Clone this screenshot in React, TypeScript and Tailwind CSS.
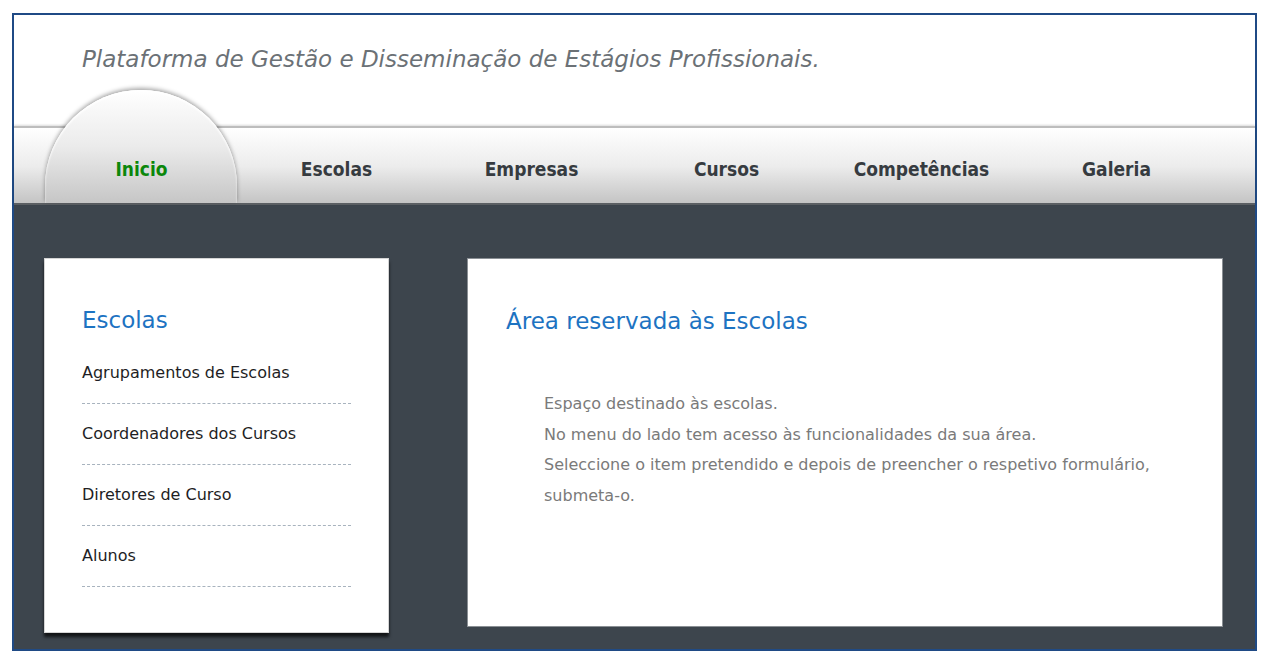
import React from 'react';

const NavBar: React.FC = () => {
  const items = ['Inicio', 'Escolas', 'Empresas', 'Cursos', 'Competências', 'Galeria'];

  return (
    <nav className="relative h-[79px] border-t-2 border-[#bdbdbd] bg-gradient-to-b from-[#ffffff] via-[#ececec] to-[#c2c2c2] shadow-[0_-1px_2px_rgba(0,0,0,0.15)]">
      <div className="absolute inset-x-0 bottom-0 h-[2px] bg-[#5b5f63]" />
      <ul className="flex h-full pl-[30px]">
        {items.map((item, i) => (
          <li key={item} className="relative flex h-full w-[195px] items-center justify-center pt-[6px]">
            {i === 0 && (
              <div className="absolute bottom-[2px] left-[1px] h-[113px] w-[192px] rounded-t-full bg-gradient-to-b from-[#ffffff] via-[#ebebeb] to-[#c6c6c6] shadow-[0_-2px_4px_rgba(0,0,0,0.35),inset_0_2px_2px_rgba(255,255,255,0.9)]" />
            )}
            <span
              className={`relative font-['DejaVu_Sans_Condensed','DejaVu_Sans',sans-serif] text-[19px] font-bold ${
                i === 0 ? 'text-[#0b870b]' : 'text-[#363b40]'
              }`}
            >
              {item}
            </span>
          </li>
        ))}
      </ul>
    </nav>
  );
};

const Sidebar: React.FC = () => {
  const links = ['Agrupamentos de Escolas', 'Coordenadores dos Cursos', 'Diretores de Curso', 'Alunos'];

  return (
    <aside className="h-[375px] w-[345px] shrink-0 border border-[#d5d5d5] bg-white pl-[37px] pr-[37px] pt-[46px] shadow-[0_4px_3px_rgba(0,0,0,0.7)]">
      <h3 className="text-[23px] leading-[30px] text-[#1d73c2] mb-[8px]">Escolas</h3>
      <ul>
        {links.map((link) => (
          <li key={link} className="border-b border-dashed border-[#a8b3be] pb-[20px] pt-[20px] text-[16px] leading-[20px] text-[#1e1e24]">
            {link}
          </li>
        ))}
      </ul>
    </aside>
  );
};

const App: React.FC = () => {
  return (
    <div className="h-[662px] w-[1269px] bg-white pl-[12px] pt-[13px] font-['DejaVu_Sans',sans-serif]">
      <div className="flex h-[638px] w-[1245px] flex-col border-2 border-[#1f4a85] bg-white">
        <header className="h-[111px] pl-[68px] pt-[29px]">
          <h1 className="text-[23px] italic leading-[30px] text-[#6b7176]">
            Plataforma de Gestão e Disseminação de Estágios Profissionais.
          </h1>
        </header>

        <NavBar />

        <main className="flex flex-1 gap-[78px] bg-[#3d454d] pl-[30px] pt-[53px]">
          <Sidebar />

          <section className="h-[369px] w-[756px] border border-[#8a8f94] bg-white pl-[38px] pt-[47px]">
            <h2 className="text-[23px] leading-[30px] text-[#1d73c2]">Área reservada às Escolas</h2>
            <div className="mt-[53px] pl-[38px] text-[16px] leading-[30.5px] text-[#7a7a7a]">
              <p>Espaço destinado às escolas.</p>
              <p>No menu do lado tem acesso às funcionalidades da sua área.</p>
              <p>Seleccione o item pretendido e depois de preencher o respetivo formulário,</p>
              <p>submeta-o.</p>
            </div>
          </section>
        </main>
      </div>
    </div>
  );
};

export default App;
